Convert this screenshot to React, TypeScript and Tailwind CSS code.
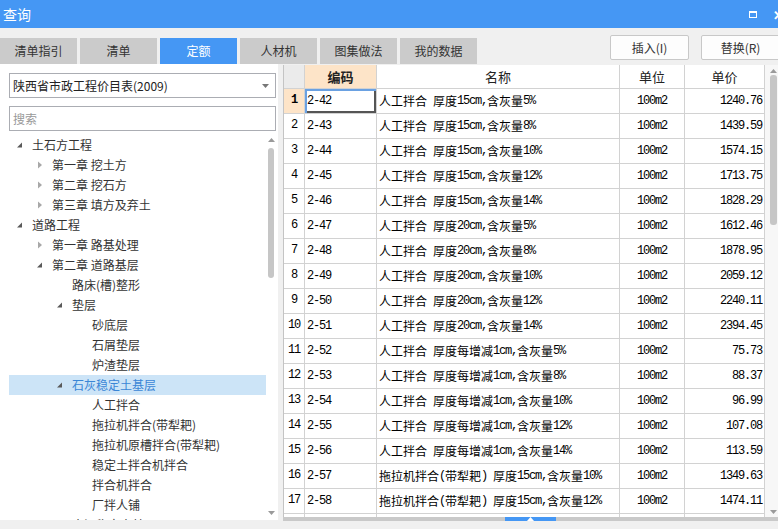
import React from 'react';

type TreeNode = { label: string; level: number; state: 'open' | 'closed' | 'leaf'; selected?: boolean };

const tree: TreeNode[] = [
  { label: '土石方工程', level: 0, state: 'open' },
  { label: '第一章 挖土方', level: 1, state: 'closed' },
  { label: '第二章 挖石方', level: 1, state: 'closed' },
  { label: '第三章 填方及弃土', level: 1, state: 'closed' },
  { label: '道路工程', level: 0, state: 'open' },
  { label: '第一章 路基处理', level: 1, state: 'closed' },
  { label: '第二章 道路基层', level: 1, state: 'open' },
  { label: '路床(槽)整形', level: 2, state: 'leaf' },
  { label: '垫层', level: 2, state: 'open' },
  { label: '砂底层', level: 3, state: 'leaf' },
  { label: '石屑垫层', level: 3, state: 'leaf' },
  { label: '炉渣垫层', level: 3, state: 'leaf' },
  { label: '石灰稳定土基层', level: 2, state: 'open', selected: true },
  { label: '人工拌合', level: 3, state: 'leaf' },
  { label: '拖拉机拌合(带犁耙)', level: 3, state: 'leaf' },
  { label: '拖拉机原槽拌合(带犁耙)', level: 3, state: 'leaf' },
  { label: '稳定土拌合机拌合', level: 3, state: 'leaf' },
  { label: '拌合机拌合', level: 3, state: 'leaf' },
  { label: '厂拌人铺', level: 3, state: 'leaf' },
  { label: '水泥稳定土基层', level: 2, state: 'closed' },
];

const rows: [string, string, string][] = [
  ['2-42', '人工拌合 厚度15cm,含灰量5%', '1240.76'],
  ['2-43', '人工拌合 厚度15cm,含灰量8%', '1439.59'],
  ['2-44', '人工拌合 厚度15cm,含灰量10%', '1574.15'],
  ['2-45', '人工拌合 厚度15cm,含灰量12%', '1713.75'],
  ['2-46', '人工拌合 厚度15cm,含灰量14%', '1828.29'],
  ['2-47', '人工拌合 厚度20cm,含灰量5%', '1612.46'],
  ['2-48', '人工拌合 厚度20cm,含灰量8%', '1878.95'],
  ['2-49', '人工拌合 厚度20cm,含灰量10%', '2059.12'],
  ['2-50', '人工拌合 厚度20cm,含灰量12%', '2240.11'],
  ['2-51', '人工拌合 厚度20cm,含灰量14%', '2394.45'],
  ['2-52', '人工拌合 厚度每增减1cm,含灰量5%', '75.73'],
  ['2-53', '人工拌合 厚度每增减1cm,含灰量8%', '88.37'],
  ['2-54', '人工拌合 厚度每增减1cm,含灰量10%', '96.99'],
  ['2-55', '人工拌合 厚度每增减1cm,含灰量12%', '107.08'],
  ['2-56', '人工拌合 厚度每增减1cm,含灰量14%', '113.59'],
  ['2-57', '拖拉机拌合(带犁耙) 厚度15cm,含灰量10%', '1349.63'],
  ['2-58', '拖拉机拌合(带犁耙) 厚度15cm,含灰量12%', '1474.11'],
  ['', '', ''],
];

const tabs = ['清单指引', '清单', '定额', '人材机', '图集做法', '我的数据'];

// latin runs in a narrow mono face, CJK in Noto
function Mixed({ text }: { text: string }) {
  const parts = text.split(/([\x20-\x7e]+)/).filter(Boolean);
  return (
    <>
      {parts.map((p, i) =>
        /^[\x20-\x7e]+$/.test(p) ? (
          <span key={i} className="font-['Liberation_Mono'] text-[12px] tracking-[-1.2px] whitespace-pre">
            {p}
          </span>
        ) : (
          <span key={i}>{p}</span>
        )
      )}
    </>
  );
}

function Arrow({ dir, color = '#9a9a9a' }: { dir: 'up' | 'down'; color?: string }) {
  return (
    <svg width="7" height="4" viewBox="0 0 7 4">
      <polygon points={dir === 'up' ? '0,4 3.5,0 7,4' : '0,0 7,0 3.5,4'} fill={color} />
    </svg>
  );
}

function TreeIcon({ state }: { state: TreeNode['state'] }) {
  if (state === 'open')
    return (
      <svg width="8" height="8" viewBox="0 0 8 8">
        <polygon points="6,1.5 6,6.5 1,6.5" fill="#595959" />
      </svg>
    );
  if (state === 'closed')
    return (
      <svg width="8" height="8" viewBox="0 0 8 8">
        <polygon points="2,0.5 6,4 2,7.5" fill="#a8a8a8" />
      </svg>
    );
  return null;
}

export default function App() {
  return (
    <div className="w-[778px] h-[529px] overflow-hidden bg-[#f0f0f0] flex flex-col font-['Noto_Sans_CJK_SC',sans-serif] text-[#333]">
      {/* title bar */}
      <div className="h-[28px] shrink-0 bg-[#4597f4] flex items-center justify-between pl-[3px]">
        <span className="text-white text-[14px] leading-none">查询</span>
        <div className="flex items-center gap-[16px] mr-[-6px]">
          <div className="w-[8px] h-[7px] border border-white border-t-2" />
          <span className="text-white text-[13px] leading-none font-bold">✕</span>
        </div>
      </div>

      {/* tabs + buttons */}
      <div className="h-[36px] shrink-0 flex justify-between">
        <div className="flex gap-[3px] pt-[10px]">
          {tabs.map((t) => (
            <div
              key={t}
              className={`w-[77px] h-[26px] flex items-center justify-center text-[12px] ${
                t === '定额' ? 'bg-[#4597f4] text-white' : 'bg-[#cbcbcb] text-[#333]'
              }`}
            >
              {t}
            </div>
          ))}
        </div>
        <div className="flex gap-[12px] pt-[7px] mr-[-2px]">
          <button className="w-[79px] h-[25px] bg-[#fdfdfd] border border-[#c8c8c8] rounded-[2px] text-[12px] text-[#333]">
            插入(I)
          </button>
          <button className="w-[79px] h-[25px] bg-[#fdfdfd] border border-[#c8c8c8] rounded-[2px] text-[12px] text-[#333]">
            替换(R)
          </button>
        </div>
      </div>

      <div className="flex flex-1 min-h-0">
        {/* left panel */}
        <div className="w-[278px] h-[456px] bg-white flex flex-col pl-[9px] pr-[2px] pt-[9px]">
          <div className="h-[25px] shrink-0 border border-[#abadb3] flex items-center justify-between pl-[3px] pr-[6px] text-[12px] text-[#222]">
            <span>陕西省市政工程价目表(2009)</span>
            <Arrow dir="down" color="#777" />
          </div>
          <div className="h-[25px] shrink-0 mt-[8px] border border-[#abadb3] flex items-center pl-[3px] text-[12px] text-[#999]">
            搜索
          </div>
          <div className="mt-[4px] flex flex-1 min-h-0">
            <div className="flex-1 overflow-hidden">
              {tree.map((n) => (
                <div
                  key={n.label}
                  className={`h-[20px] flex items-center text-[12px] ${
                    n.selected ? 'bg-[#cce4f7] text-[#3a86d6]' : 'text-[#333]'
                  }`}
                  style={{ paddingLeft: n.level * 20 }}
                >
                  <div className="w-[23px] h-[20px] flex items-center pl-[7px] shrink-0">
                    <TreeIcon state={n.state} />
                  </div>
                  <span className="whitespace-pre">{n.label}</span>
                </div>
              ))}
            </div>
            <div className="w-[10px] flex flex-col items-center pt-[3px] pb-[5px]">
              <Arrow dir="up" />
              <div className="w-[6px] h-[130px] mt-[6px] rounded-[3px] bg-[#c6c6c6]" />
              <div className="flex-1" />
              <Arrow dir="down" />
            </div>
          </div>
        </div>

        {/* table */}
        <div className="ml-[5px] mt-[1px] flex-1 flex flex-col">
          <div className="h-[452px] shrink-0 flex border-l border-[#c4c4c4] bg-white overflow-hidden">
            <div className="flex flex-col text-black">
              <div className="flex h-[24px] shrink-0 text-[13px] text-[#222]">
                <div className="w-[21px] bg-[#ebebeb] border-r border-b border-[#d2d2d2]" />
                <div className="w-[72px] bg-[#fde4c8] border-r border-b border-[#d2d2d2] flex items-center justify-center font-bold">
                  编码
                </div>
                <div className="w-[243px] border-r border-b border-[#d2d2d2] flex items-center justify-center">名称</div>
                <div className="w-[65px] border-r border-b border-[#d2d2d2] flex items-center justify-center">单位</div>
                <div className="w-[80px] border-r border-b border-[#d2d2d2] flex items-center justify-center">单价</div>
              </div>
              {rows.map(([code, name, price], i) => (
                <div key={i} className="flex h-[25px] text-[12px] shrink-0">
                  <div
                    className={`w-[21px] border-r border-b border-[#d2d2d2] flex items-center justify-center pb-[2px] ${
                      i === 0 ? 'bg-[#fde4c8] font-bold' : ''
                    }`}
                  >
                    <span className="font-['Liberation_Mono'] text-[12px] tracking-[-1.2px]">{code ? i + 1 : ''}</span>
                  </div>
                  <div
                    className={`w-[72px] border-r border-b border-[#d2d2d2] flex items-center pl-[2px] ${
                      i === 0 ? 'shadow-[inset_2px_2px_0_#6aa1e2,inset_-2px_-2px_0_#555]' : ''
                    }`}
                  >
                    <Mixed text={code} />
                  </div>
                  <div className="w-[243px] border-r border-b border-[#d2d2d2] flex items-center pl-[2px] whitespace-pre">
                    <Mixed text={name} />
                  </div>
                  <div className="w-[65px] border-r border-b border-[#d2d2d2] flex items-center justify-center">
                    <Mixed text={code ? '100m2' : ''} />
                  </div>
                  <div className="w-[80px] border-r border-b border-[#d2d2d2] flex items-center justify-end pr-[2px]">
                    <Mixed text={price} />
                  </div>
                </div>
              ))}
            </div>
            <div className="flex-1 bg-[#f7f7f7] flex flex-col items-center pl-[4px] pt-[4px] pb-[3px]">
              <Arrow dir="up" />
              <div className="w-[7px] h-[150px] mt-[2px] rounded-[3px] bg-[#c6c6c6]" />
              <div className="flex-1" />
              <Arrow dir="down" />
            </div>
          </div>
          <div className="h-[4px] shrink-0 bg-[#c9c9c9] flex justify-center">
            <div className="w-[51px] h-[4px] bg-[#4597f4] flex items-center justify-center">
              <Arrow dir="up" color="#ffffff" />
            </div>
          </div>
        </div>
      </div>
    </div>
  );
}
